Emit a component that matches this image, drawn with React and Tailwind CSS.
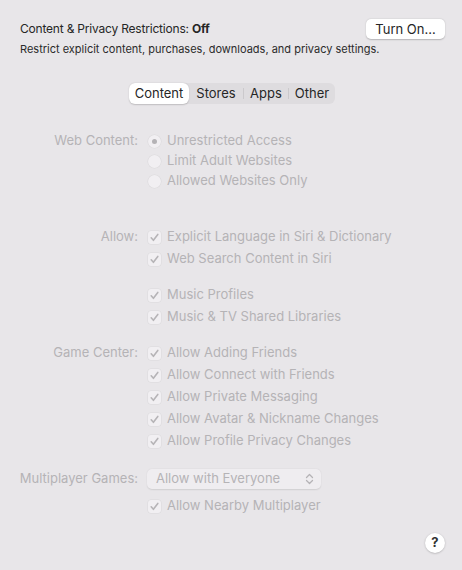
import React from 'react';

// --- Sub-components ---

const Check = () => (
    <span className="w-[13px] h-[13px] rounded-[3px] bg-[#f1eff2] shadow-[0_0_0_0.5px_rgba(0,0,0,0.06)] flex items-center justify-center shrink-0">
        <svg width="11" height="11" viewBox="0 0 11 11">
            <path d="M2.2 5.8 L4.4 8.3 L8.8 2.4" fill="none" stroke="#b6b4b7" strokeWidth="1.6" strokeLinecap="round" strokeLinejoin="round" />
        </svg>
    </span>
);

const Radio = ({ on }) => (
    <span className="w-[13px] h-[13px] rounded-full bg-[#f1eff2] shadow-[0_0_0_0.5px_rgba(0,0,0,0.06)] flex items-center justify-center shrink-0">
        {on && <span className="w-[5px] h-[5px] rounded-full bg-[#b4b2b5]" />}
    </span>
);

const Row = ({ label, children, className = '' }) => (
    <div className={`flex items-center h-[22px] ${className}`}>
        <div className="w-[139px] pr-[1px] text-right text-[#b5b3b6] shrink-0">{label}</div>
        <div className="flex items-center gap-[6px] pl-[9px] text-[#b5b3b6]">{children}</div>
    </div>
);

const CheckRow = ({ label, text, className }) => (
    <Row label={label} className={className}>
        <Check />
        <span>{text}</span>
    </Row>
);

const RadioRow = ({ label, text, on }) => (
    <div className="flex items-center h-[20px]">
        <div className="w-[139px] pr-[1px] text-right text-[#b5b3b6] shrink-0">{label}</div>
        <div className="flex items-center gap-[6px] pl-[9px] text-[#b5b3b6]">
            <Radio on={on} />
            <span>{text}</span>
        </div>
    </div>
);

const Segments = () => (
    <div className="flex items-center h-[21px] rounded-[6px] bg-[#dedcdf] text-[13px] text-[#262626]">
        <div className="h-[21px] w-[60px] rounded-[6px] bg-white shadow-[0_0.5px_1.5px_rgba(0,0,0,0.18)] flex items-center justify-center">Content</div>
        <div className="w-[54px] flex items-center justify-center">Stores</div>
        <div className="w-px h-[11px] bg-[#cbc9cc]" />
        <div className="w-[44px] flex items-center justify-center">Apps</div>
        <div className="w-px h-[11px] bg-[#cbc9cc]" />
        <div className="w-[46px] flex items-center justify-center">Other</div>
    </div>
);

// --- Main component ---

export default function App() {
    return (
        <div
            className="w-[462px] h-[570px] bg-[#e8e6e9] text-[13px] relative overflow-hidden"
            style={{ fontFamily: 'Inter, "Liberation Sans", sans-serif' }}
        >
            <div className="flex items-center justify-between pl-[20px] pr-[17px] pt-[19px]">
                <div className="text-[#262626] text-[12px] tracking-[-0.2px]">
                    Content &amp; Privacy Restrictions: <span className="font-bold">Off</span>
                </div>
                <button className="h-[20px] w-[79px] rounded-[5px] bg-white shadow-[0_0.5px_1.5px_rgba(0,0,0,0.22)] text-[#262626] text-[13px] leading-none">
                    Turn On…
                </button>
            </div>
            <p className="pl-[20px] mt-[3px] text-[11px] leading-[14px] text-[#2b2b2b]">
                Restrict explicit content, purchases, downloads, and privacy settings.
            </p>

            <div className="flex justify-center mt-[27px] pl-[2px]">
                <Segments />
            </div>

            <div className="mt-[27px]">
                <RadioRow label="Web Content:" text="Unrestricted Access" on />
                <RadioRow text="Limit Adult Websites" />
                <RadioRow text="Allowed Websites Only" />

                <CheckRow className="mt-[35px]" label="Allow:" text="Explicit Language in Siri & Dictionary" />
                <CheckRow text="Web Search Content in Siri" />

                <CheckRow className="mt-[14px]" text="Music Profiles" />
                <CheckRow text="Music & TV Shared Libraries" />

                <CheckRow className="mt-[14px]" label="Game Center:" text="Allow Adding Friends" />
                <CheckRow text="Allow Connect with Friends" />
                <CheckRow text="Allow Private Messaging" />
                <CheckRow text="Allow Avatar & Nickname Changes" />
                <CheckRow text="Allow Profile Privacy Changes" />

                <div className="flex items-center h-[22px] mt-[16px]">
                    <div className="w-[139px] pr-[1px] text-right text-[#b5b3b6] shrink-0">Multiplayer Games:</div>
                    <div className="ml-[8px] w-[174px] h-[20px] rounded-[5px] bg-[#efedf0] shadow-[0_0.5px_1.5px_rgba(0,0,0,0.1)] flex items-center justify-between pl-[9px] pr-[7px] text-[#b5b3b6]">
                        <span>Allow with Everyone</span>
                        <svg width="9" height="12" viewBox="0 0 9 12">
                            <path d="M1.5 4.5 L4.5 1.5 L7.5 4.5 M1.5 7.5 L4.5 10.5 L7.5 7.5" fill="none" stroke="#b5b3b6" strokeWidth="1.3" strokeLinecap="round" strokeLinejoin="round" />
                        </svg>
                    </div>
                </div>
                <CheckRow className="mt-[5px]" text="Allow Nearby Multiplayer" />
            </div>

            <div className="absolute right-[17px] top-[533px] w-[20px] h-[20px] rounded-full bg-white shadow-[0_0.5px_2px_rgba(0,0,0,0.25)] flex items-center justify-center text-[13px] font-bold text-[#333]">
                ?
            </div>
        </div>
    );
}
